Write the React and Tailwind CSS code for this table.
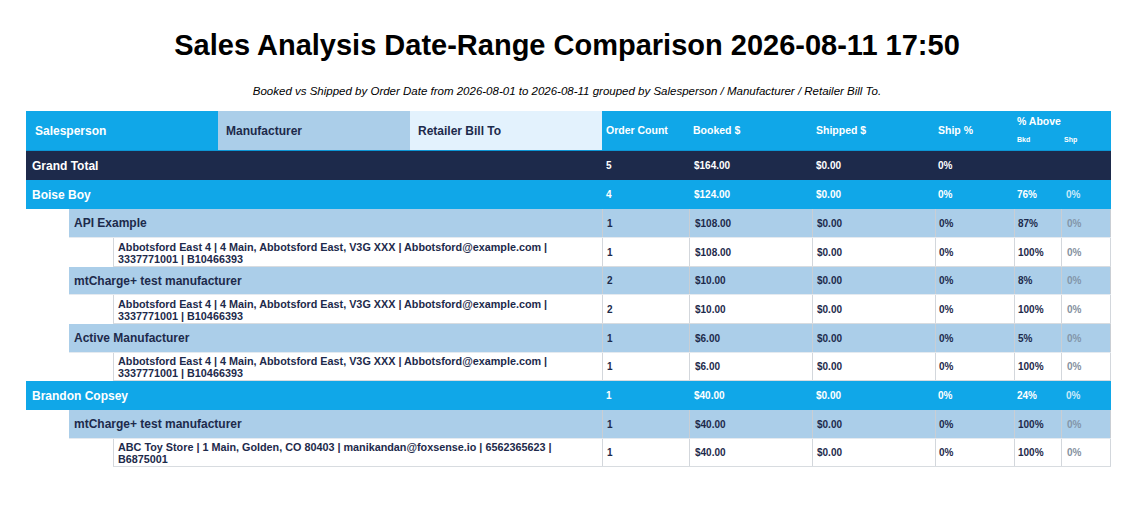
import React from "react";

const BLUE = "bg-[#10a7e8]";

const rows = [
  { type: "grand", label: "Grand Total", oc: "5", bk: "$164.00", sh: "$0.00", sp: "0%", bkd: "", shp: "", h: "h-[29px]" },
  { type: "sales", label: "Boise Boy", oc: "4", bk: "$124.00", sh: "$0.00", sp: "0%", bkd: "76%", shp: "0%", h: "h-[29px]" },
  { type: "mfr", label: "API Example", oc: "1", bk: "$108.00", sh: "$0.00", sp: "0%", bkd: "87%", shp: "0%", h: "h-[29px]" },
  { type: "det", lines: ["Abbotsford East 4 | 4 Main, Abbotsford East, V3G XXX | Abbotsford@example.com |", "3337771001 | B10466393"], oc: "1", bk: "$108.00", sh: "$0.00", sp: "0%", bkd: "100%", shp: "0%", h: "h-[29px]" },
  { type: "mfr", label: "mtCharge+ test manufacturer", oc: "2", bk: "$10.00", sh: "$0.00", sp: "0%", bkd: "8%", shp: "0%", h: "h-[28px]" },
  { type: "det", lines: ["Abbotsford East 4 | 4 Main, Abbotsford East, V3G XXX | Abbotsford@example.com |", "3337771001 | B10466393"], oc: "2", bk: "$10.00", sh: "$0.00", sp: "0%", bkd: "100%", shp: "0%", h: "h-[29px]" },
  { type: "mfr", label: "Active Manufacturer", oc: "1", bk: "$6.00", sh: "$0.00", sp: "0%", bkd: "5%", shp: "0%", h: "h-[29px]" },
  { type: "det", lines: ["Abbotsford East 4 | 4 Main, Abbotsford East, V3G XXX | Abbotsford@example.com |", "3337771001 | B10466393"], oc: "1", bk: "$6.00", sh: "$0.00", sp: "0%", bkd: "100%", shp: "0%", h: "h-[28px]" },
  { type: "sales", label: "Brandon Copsey", oc: "1", bk: "$40.00", sh: "$0.00", sp: "0%", bkd: "24%", shp: "0%", h: "h-[29px]" },
  { type: "mfr", label: "mtCharge+ test manufacturer", oc: "1", bk: "$40.00", sh: "$0.00", sp: "0%", bkd: "100%", shp: "0%", h: "h-[29px]" },
  { type: "det", lines: ["ABC Toy Store | 1 Main, Golden, CO 80403 | manikandan@foxsense.io | 6562365623 |", "B6875001"], oc: "1", bk: "$40.00", sh: "$0.00", sp: "0%", bkd: "100%", shp: "0%", h: "h-[28px]" },
];

function Row({ r }) {
  const styles = {
    grand: { bg: "bg-[#1d2a4b]", text: "text-white", shp: "text-white", border: "", indent: "w-0", pad: "pl-[6px]" },
    sales: { bg: BLUE, text: "text-white", shp: "text-[#c9e9f9]", border: "", indent: "w-0", pad: "pl-[6px]" },
    mfr: { bg: "bg-[#abcee9]", text: "text-[#1d2a4b]", shp: "text-[#8396aa]", border: "border-l border-[#c9ced4]", indent: "w-[43px]", pad: "pl-[5px]" },
    det: { bg: "bg-white", text: "text-[#1d2a4b]", shp: "text-[#8591a0]", border: "border-l border-[#d3d7dc]", indent: "w-[87px]", pad: "pl-[4px]" },
  }[r.type];
  const rowBorder = r.type === "det" ? "border-b border-[#d8dce0]" : r.type === "mfr" ? "border-b border-[#e4eaf0]" : "";
  const cell = `${styles.bg} ${styles.border} ${styles.text} flex items-center text-[10px] font-bold`;
  return (
    <div className={`flex ${r.h}`}>
      <div className="flex w-[576px]">
        <div className={`${styles.indent} shrink-0 bg-white`} />
        <div className={`flex-1 flex items-center ${styles.bg} ${styles.pad} ${styles.text} ${rowBorder} ${r.type === "det" ? "border-l border-l-[#d3d7dc]" : ""} font-bold`}>
          {r.type === "det" ? (
            <div className="text-[10.8px] leading-[12px] pt-[1px]">
              <div>{r.lines[0]}</div>
              <div>{r.lines[1]}</div>
            </div>
          ) : (
            <span className="text-[12px]">{r.label}</span>
          )}
        </div>
      </div>
      <div className={`flex flex-1 ${rowBorder}`}>
        <div className={`${cell} w-[87px] pl-[4px]`}>{r.oc}</div>
        <div className={`${cell} w-[123px] pl-[5px]`}>{r.bk}</div>
        <div className={`${cell} w-[123px] pl-[4px]`}>{r.sh}</div>
        <div className={`${cell} w-[79px] pl-[3px]`}>{r.sp}</div>
        <div className={`${cell} w-[47px] pl-[3px]`}>{r.bkd}</div>
        <div className={`${cell} flex-1 pl-[5px] ${r.type === "det" || r.type === "mfr" ? "border-r" : ""}`}>
          <span className={styles.shp}>{r.shp}</span>
        </div>
      </div>
    </div>
  );
}

export default function App() {
  return (
    <div className="w-[1134px] min-h-[515px] bg-white text-black font-['Liberation_Sans',Arial,sans-serif]">
      <h1 className="pt-[28px] text-center text-[29px] leading-[34px] font-bold">
        Sales Analysis Date-Range Comparison 2026-08-11 17:50
      </h1>
      <p className="mt-[22px] text-center text-[11.5px] leading-[14px] italic">
        Booked vs Shipped by Order Date from 2026-08-01 to 2026-08-11 grouped by Salesperson / Manufacturer / Retailer Bill To.
      </p>
      <div className="mt-[13px] ml-[26px] w-[1085px]">
        <div className="flex h-[40px] border-b border-[#0c95d4]">
          <div className={`w-[192px] ${BLUE} flex items-center pl-[9px] text-[12px] font-bold text-white`}>Salesperson</div>
          <div className="w-[192px] bg-[#abcee9] flex items-center pl-[8px] text-[12px] font-bold text-[#1d2a4b]">Manufacturer</div>
          <div className="w-[192px] bg-[#e3f2fd] flex items-center pl-[8px] text-[12px] font-bold text-[#1d2a4b]">Retailer Bill To</div>
          <div className={`flex flex-1 ${BLUE} text-white font-bold`}>
            <div className="w-[87px] flex items-center pl-[4px] text-[10.5px]">Order Count</div>
            <div className="w-[123px] flex items-center pl-[4px] text-[10.5px]">Booked $</div>
            <div className="w-[123px] flex items-center pl-[4px] text-[10.5px]">Shipped $</div>
            <div className="w-[79px] flex items-center pl-[3px] text-[10.5px]">Ship %</div>
            <div className="flex-1 flex flex-col">
              <div className="h-[22px] flex items-center pl-[3px] text-[10.5px]">% Above</div>
              <div className="flex flex-1 text-[7px] items-start pt-[2px]">
                <div className="w-[47px] pl-[3px]">Bkd</div>
                <div className="flex-1 pl-[3px]">Shp</div>
              </div>
            </div>
          </div>
        </div>
        {rows.map((r, i) => (
          <Row key={i} r={r} />
        ))}
      </div>
    </div>
  );
}
